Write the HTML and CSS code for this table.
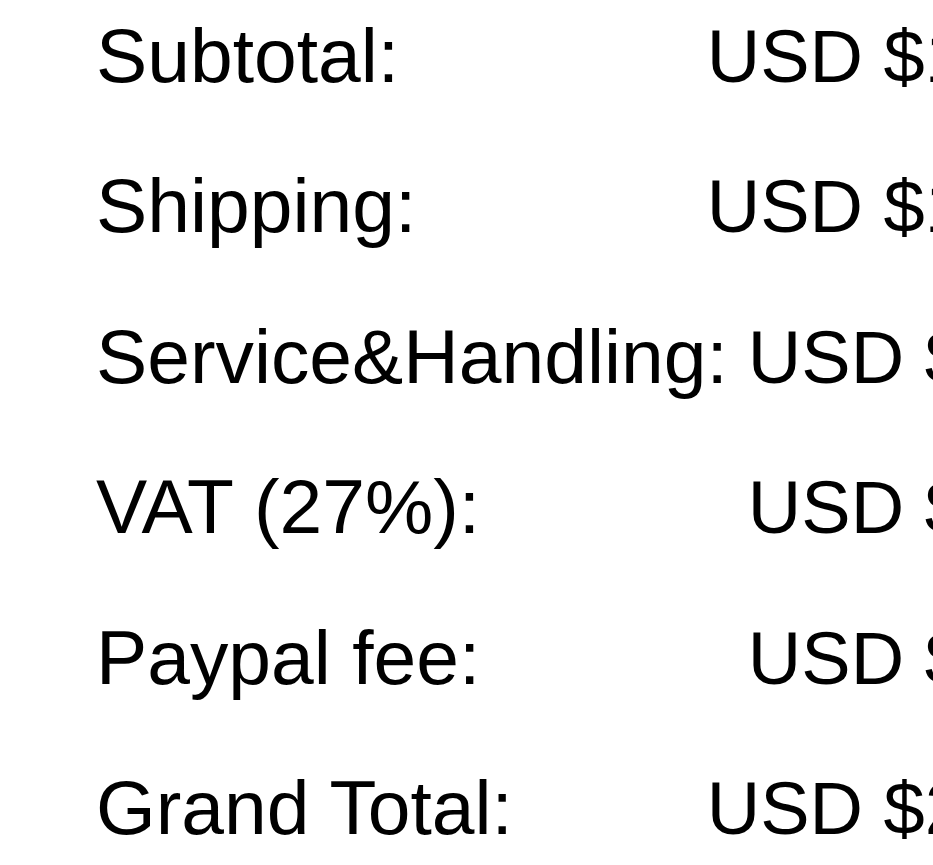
FILE: index.html
```html
<!DOCTYPE html>
<html lang="en">
<head>
<meta charset="utf-8">
<title>Order totals</title>
<link rel="stylesheet" href="styles.css">
</head>
<body>
<div class="viewport">
  <div class="totals">
    <div class="row"><span class="label">Subtotal:</span><span class="value">USD $100.00</span></div>
    <div class="row"><span class="label">Shipping:</span><span class="value">USD $100.00</span></div>
    <div class="row"><span class="label">Service&amp;Handling:</span><span class="value">USD $10.00</span></div>
    <div class="row"><span class="label">VAT (27%):</span><span class="value">USD $56.70</span></div>
    <div class="row"><span class="label">Paypal fee:</span><span class="value">USD $10.70</span></div>
    <div class="row"><span class="label">Grand Total:</span><span class="value">USD $277.40</span></div>
  </div>
</div>
</body>
</html>
```
FILE: styles.css
```css
html, body {
  margin: 0;
  padding: 0;
  background: #ffffff;
  overflow: hidden;
}
.viewport {
  width: 933px;
  height: 865px;
  overflow: hidden;
}
.totals {
  display: flex;
  flex-direction: column;
  gap: 62.4px;
  padding: 11px 0 0 96px;
  width: 1055px;
  font-family: "Liberation Sans", Arial, sans-serif;
  font-size: 76.8px;
  line-height: 88px;
  color: #000000;
}
.row {
  display: flex;
  justify-content: space-between;
  align-items: baseline;
  height: 88px;
  white-space: nowrap;
}
.value {
  font-size: 74px;
  text-align: right;
}
```
